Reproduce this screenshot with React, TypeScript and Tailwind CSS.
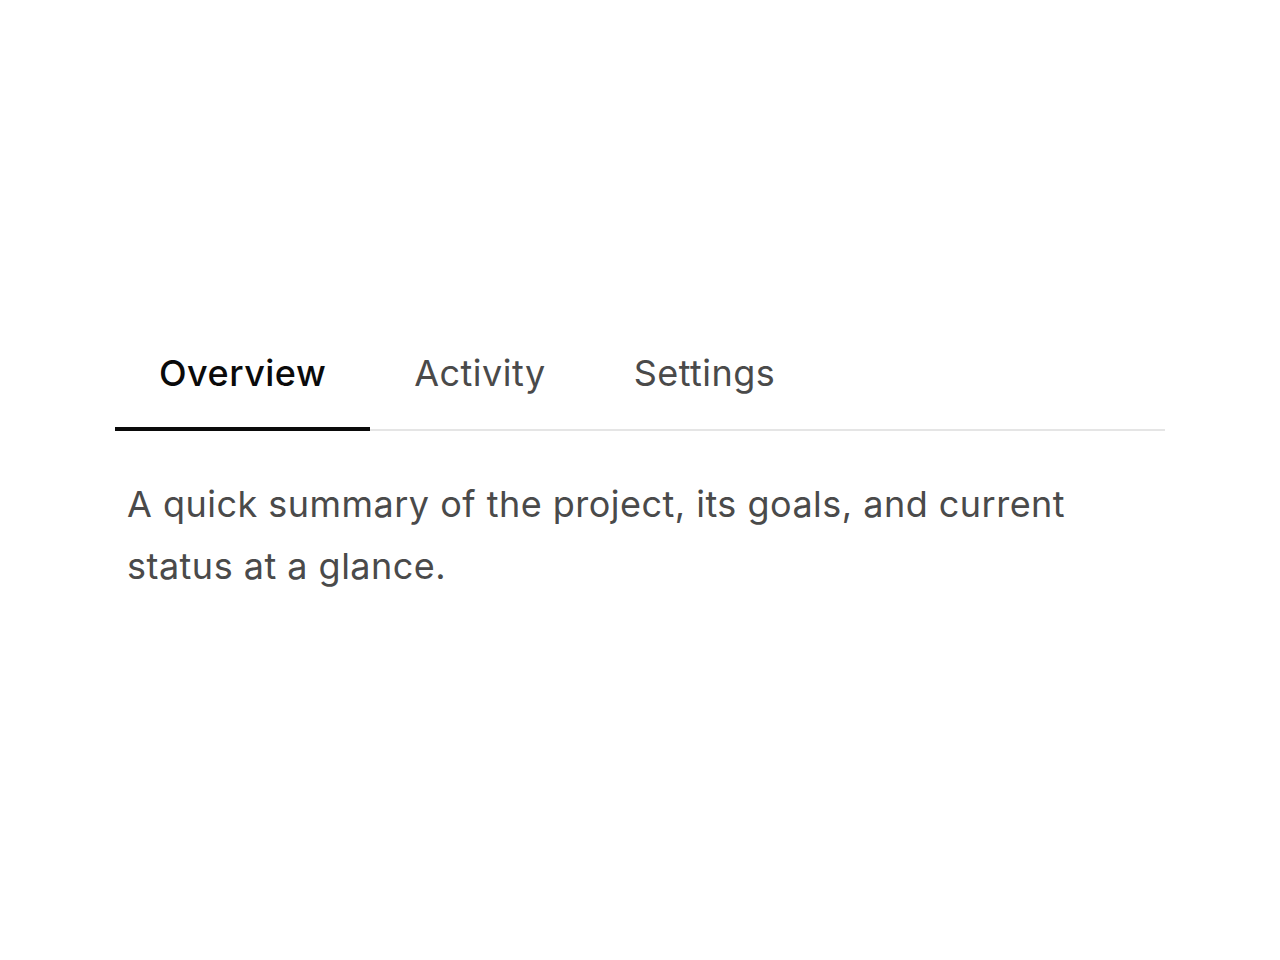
import React, { useState } from 'react';

const tabs = [
  { id: 'overview', label: 'Overview', body: 'A quick summary of the project, its goals, and current status at a glance.' },
  { id: 'activity', label: 'Activity', body: 'Recent updates, comments and changes made by the team.' },
  { id: 'settings', label: 'Settings', body: 'Manage project preferences, members and notifications.' },
];

export default function App() {
  const [active, setActive] = useState('overview');
  const current = tabs.find(t => t.id === active)!;

  return (
    <div className="min-h-screen bg-white pt-[324px] font-['Inter',sans-serif] tracking-[0.03em]">
      <div className="mx-auto w-[1050px]">
        <div className="flex border-b-2 border-[#e5e5e5]">
          {tabs.map(tab => (
            <button
              key={tab.id}
              onClick={() => setActive(tab.id)}
              className={
                tab.id === active
                  ? 'px-[44px] pt-[22px] pb-[27px] -mb-[2px] border-b-4 border-[#0a0a0a] text-[36px] leading-[54px] font-medium text-[#0a0a0a]'
                  : 'px-[44px] pt-[22px] pb-[27px] -mb-[2px] border-b-4 border-transparent text-[36px] leading-[54px] text-[#4a4a4a]'
              }
            >
              {tab.label}
            </button>
          ))}
        </div>
        <p className="mt-[42px] px-[12px] pr-[60px] text-[36px] leading-[62px] text-[#4a4a4a]">
          {current.body}
        </p>
      </div>
    </div>
  );
}
